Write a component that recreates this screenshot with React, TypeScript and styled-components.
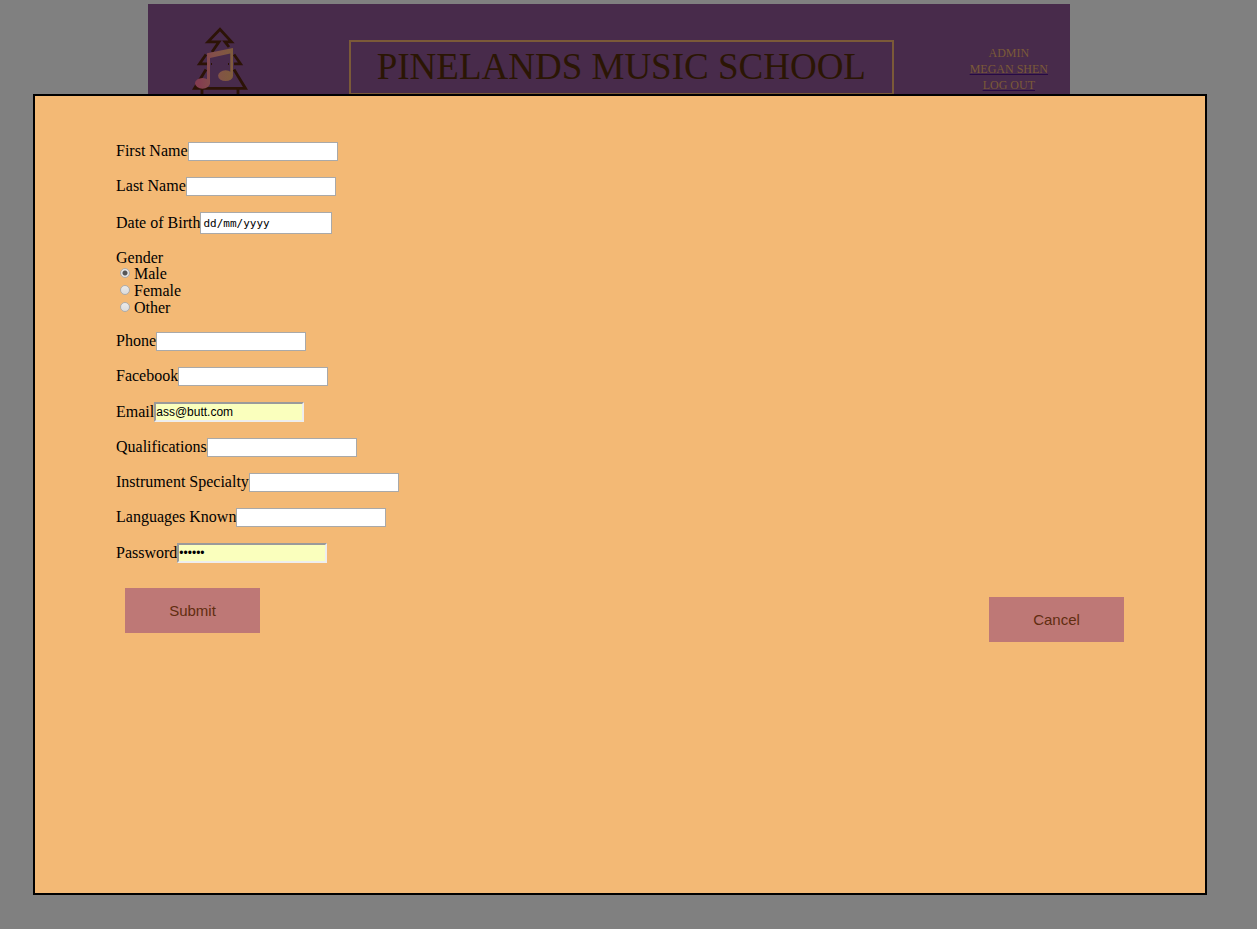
import React from "react";
import styled, { createGlobalStyle, css } from "styled-components";

const GlobalStyle = createGlobalStyle`
  * { box-sizing: border-box; }
  body {
    margin: 0;
    background: #808080;
    color: #000;
    font-family: "Liberation Serif", serif;
  }
`;

const Page = styled.div`
  min-height: 100vh;
  padding: 4px 187px 0 148px;
`;

const Header = styled.header`
  display: flex;
  align-items: flex-start;
  justify-content: space-between;
  min-height: 120px;
  padding: 22px 22px 0 43px;
  background: #482b4b;
`;

const Logo = styled.svg`
  width: 58px;
  height: 74px;
`;

const Title = styled.h1`
  margin: 14px 0 0 24px;
  padding: 0 26px 2px;
  border: 2px solid #7b5a38;
  color: #2b1604;
  font-size: 37px;
  font-weight: 400;
  line-height: 49px;
  white-space: nowrap;
`;

const Account = styled.nav`
  display: flex;
  flex-direction: column;
  align-items: center;
  margin-top: 19px;
  color: #7b5a38;
  font-size: 12px;
  line-height: 16px;
`;

const AccountLink = styled.a`
  color: inherit;
  text-decoration: underline #270a45;
`;

const Dialog = styled.div`
  position: fixed;
  inset: 94px 50px 34px 33px;
  overflow: auto;
  padding: 46px 81px;
  border: 2px solid #000;
  background: #f3b975;
`;

const Form = styled.form`
  display: flex;
  flex-direction: column;
  gap: 16px;
`;

const Row = styled.div`
  display: flex;
  align-items: center;
`;

const Label = styled.label`
  padding-bottom: 1px;
  font-size: 16px;
  line-height: 16px;
  white-space: nowrap;
`;

type Kind = "plain" | "date" | "filled";

const TextInput = styled.input<{ $kind: Kind }>`
  width: 150px;
  height: 19px;
  padding: 0 1px;
  border: 1px solid #a9a9a9;
  border-radius: 0;
  background: #fff;
  color: #000;
  font: 12px "Liberation Sans", sans-serif;
  outline: none;

  &::placeholder {
    color: #000;
    opacity: 1;
  }

  ${(p) =>
    p.$kind === "date" &&
    css`
      width: 132px;
      height: 22px;
      padding: 0 2px;
      font: 11px "DejaVu Sans Mono", monospace;
    `}

  ${(p) =>
    p.$kind === "filled" &&
    css`
      height: 20px;
      padding: 0;
      border: 2px solid;
      border-color: #9a9a9a #eee #eee #9a9a9a;
      background: #faffbd;
    `}
`;

const Group = styled.fieldset`
  margin: 0;
  padding: 0;
  border: 0;
`;

const Legend = styled.legend`
  padding: 0;
  font-size: 16px;
  line-height: 15px;
`;

const Option = styled.label`
  display: flex;
  align-items: center;
  gap: 4px;
  padding-left: 4px;
  font-size: 16px;
  line-height: 17px;
`;

const Radio = styled.input`
  appearance: none;
  width: 10px;
  height: 10px;
  margin: 0 0 2px;
  border: 1px solid #adadad;
  border-radius: 50%;
  background: linear-gradient(#eaeaea, #dcdcdc);

  &:checked {
    background: radial-gradient(circle, #555 0 2px, #e4e4e4 3px);
  }
`;

const Actions = styled.div`
  display: flex;
  align-items: flex-start;
  justify-content: space-between;
  margin-top: 9px;
  padding-left: 9px;
`;

const Button = styled.button<{ $lowered?: boolean }>`
  width: 135px;
  height: 45px;
  margin-top: ${(p) => (p.$lowered ? 9 : 0)}px;
  padding: 0;
  border: 0;
  background: #be7876;
  color: #612d10;
  font: 15px "Liberation Sans", sans-serif;
`;

type FieldProps = {
  id: string;
  label: string;
  type?: string;
  kind?: Kind;
  value?: string;
  placeholder?: string;
};

function Field({ id, label, type = "text", kind = "plain", value, placeholder }: FieldProps) {
  return (
    <Row>
      <Label htmlFor={id}>{label}</Label>
      <TextInput id={id} name={id} type={type} $kind={kind} defaultValue={value} placeholder={placeholder} />
    </Row>
  );
}

function TreeLogo() {
  return (
    <Logo viewBox="0 0 58 74" role="img" aria-label="Pinelands Music School">
      <defs>
        <linearGradient id="note" gradientUnits="userSpaceOnUse" x1="4" y1="0" x2="42" y2="0">
          <stop offset="0.1" stopColor="#833c50" />
          <stop offset="0.5" stopColor="#83504a" />
          <stop offset="1" stopColor="#7f5c3c" />
        </linearGradient>
      </defs>
      <g fill="none" stroke="#2c1306" strokeWidth="2.8">
        <path d="M21 26 L28 15.9 H17 L29 3.2 L40.5 15.9 H34 L38 21" />
        <path d="M15 28.5 L8.5 37.8 H16" />
        <path d="M43 28.5 L49.5 37.8 H43" />
        <path d="M15 43.5 L3.5 62.4 H54.5 L43 43.5" />
        <path d="M11 62 V74 M47 62 V74" />
        <path d="M20 38 H21 M37 38 H38" strokeWidth="2" />
      </g>
      <g fill="url(#note)">
        <path d="M16 27.3 L42 22 V50 H39.3 V27.5 L19 32 V57 H16 Z" />
        <ellipse cx="11.5" cy="57.3" rx="7.5" ry="5.4" />
        <ellipse cx="34.6" cy="49.7" rx="7.5" ry="5.4" />
      </g>
    </Logo>
  );
}

export default function App() {
  return (
    <>
      <GlobalStyle />
      <Page>
        <Header>
          <TreeLogo />
          <Title>PINELANDS MUSIC SCHOOL</Title>
          <Account>
            <span>ADMIN</span>
            <AccountLink href="#profile">MEGAN SHEN</AccountLink>
            <AccountLink href="#logout">LOG OUT</AccountLink>
          </Account>
        </Header>
      </Page>
      <Dialog role="dialog" aria-label="Staff details">
        <Form onSubmit={(e) => e.preventDefault()}>
          <Field id="firstName" label="First Name" />
          <Field id="lastName" label="Last Name" />
          <Field id="birthDate" label="Date of Birth" kind="date" placeholder="dd/mm/yyyy" />
          <Group>
            <Legend>Gender</Legend>
            {["Male", "Female", "Other"].map((name, i) => (
              <Option key={name}>
                <Radio type="radio" name="gender" value={name} defaultChecked={i === 0} />
                {name}
              </Option>
            ))}
          </Group>
          <Field id="phone" label="Phone" />
          <Field id="facebook" label="Facebook" />
          <Field id="email" label="Email" type="email" kind="filled" value="ass@butt.com" />
          <Field id="qualifications" label="Qualifications" />
          <Field id="instrument" label="Instrument Specialty" />
          <Field id="languages" label="Languages Known" />
          <Field id="password" label="Password" type="password" kind="filled" value="abcdef" />
          <Actions>
            <Button type="submit">Submit</Button>
            <Button type="button" $lowered>Cancel</Button>
          </Actions>
        </Form>
      </Dialog>
    </>
  );
}
